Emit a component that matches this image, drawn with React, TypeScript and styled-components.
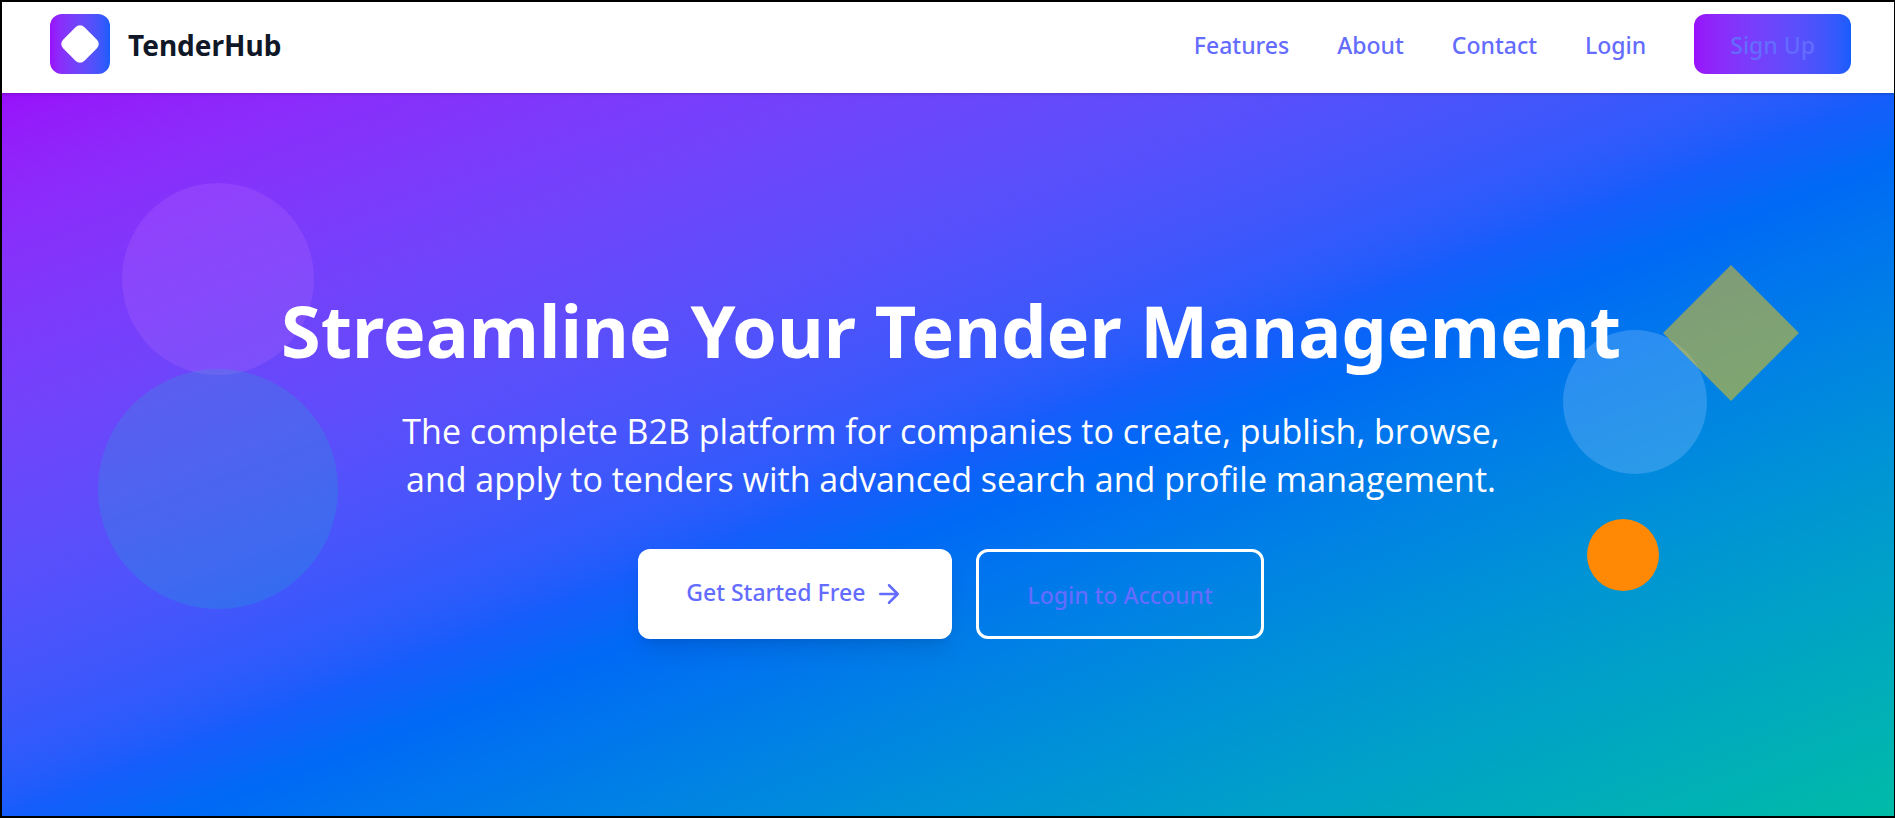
import React from 'react';
import styled, { createGlobalStyle, css } from 'styled-components';

const font = '"Noto Sans", "Open Sans", sans-serif';
const linkColor = '#646cff';
const brandGradient =
  'linear-gradient(to right in oklab, oklch(55.8% 0.288 302.321), oklch(54.6% 0.245 262.881))';

const GlobalStyle = createGlobalStyle`
  *, *::before, *::after { box-sizing: border-box; }
  body { margin: 0; font-family: ${font}; }
`;

const Page = styled.div`
  display: flex;
  flex-direction: column;
  min-height: 100vh;
  border: 2px solid #000;
  border-right-width: 1px;
  background: #fff;
`;

const Header = styled.header`
  position: relative;
  z-index: 1;
  display: flex;
  align-items: center;
  justify-content: space-between;
  padding: 12px 43px 19px 48px;
  background: #fff;
  box-shadow: 0 1px 3px rgba(0, 0, 0, 0.1), 0 1px 2px rgba(0, 0, 0, 0.1);
`;

const Brand = styled.div`
  display: flex;
  align-items: center;
  gap: 18px;
`;

const Logo = styled.span`
  display: flex;
  align-items: center;
  justify-content: center;
  width: 60px;
  height: 60px;
  border-radius: 12px;
  background: ${brandGradient};

  &::before {
    content: '';
    width: 30px;
    height: 30px;
    border-radius: 6px;
    background: #fff;
    transform: rotate(45deg);
  }
`;

const BrandName = styled.span`
  padding-top: 2px;
  font-size: 28px;
  line-height: 42px;
  font-weight: 700;
  color: #101828;
`;

const Nav = styled.nav`
  display: flex;
  align-items: center;
  gap: 48px;
`;

const TextLink = styled.a`
  padding-top: 2px;
  font-size: 23px;
  line-height: 36px;
  font-weight: 500;
  color: ${linkColor};
  text-decoration: none;
`;

const SignUpLink = styled(TextLink)`
  padding: 13px 36px 11px;
  border-radius: 12px;
  background: ${brandGradient};
`;

const Hero = styled.section`
  position: relative;
  flex: 1;
  display: flex;
  flex-direction: column;
  align-items: center;
  justify-content: center;
  padding: 96px 0 82px 6px;
  overflow: hidden;
  background: linear-gradient(
    to bottom right in oklab,
    oklch(55.8% 0.288 302.321),
    oklch(54.6% 0.245 262.881),
    oklch(70.4% 0.14 182.503)
  );
`;

const Shape = styled.span<{ $size: number; $top: number; $left?: number; $right?: number; $color: string; $diamond?: boolean }>`
  position: absolute;
  top: ${(p) => p.$top}px;
  ${(p) => (p.$left !== undefined ? `left: ${p.$left}px;` : `right: ${p.$right}px;`)}
  width: ${(p) => p.$size}px;
  height: ${(p) => p.$size}px;
  background: ${(p) => p.$color};
  ${(p) => (p.$diamond ? css`transform: rotate(45deg);` : css`border-radius: 50%;`)}
`;

const Content = styled.div`
  position: relative;
  display: flex;
  flex-direction: column;
  align-items: center;
  text-align: center;
  color: #fff;
`;

const Title = styled.h1`
  margin: 0 0 32px;
  font-size: 72px;
  line-height: 90px;
  font-weight: 700;
`;

const Lead = styled.p`
  max-width: 1152px;
  margin: 0 0 46px;
  font-family: "Open Sans", "Noto Sans", sans-serif;
  font-size: 34px;
  line-height: 48px;
`;

const Actions = styled.div`
  display: flex;
  gap: 24px;
`;

const ActionLink = styled(TextLink)<{ $outline?: boolean }>`
  padding: 25px 48px 23px;
  border-radius: 12px;
  ${(p) =>
    p.$outline
      ? css`border: 3px solid #fff;`
      : css`
          background: #fff;
          box-shadow: 0 15px 23px -5px rgba(0, 0, 0, 0.1), 0 6px 9px -6px rgba(0, 0, 0, 0.1);
        `}
`;

const Arrow = styled.svg`
  width: 30px;
  height: 30px;
  margin-left: 9px;
  vertical-align: middle;
  fill: none;
  stroke: currentColor;
  stroke-width: 2;
  stroke-linecap: round;
  stroke-linejoin: round;
`;

const links = ['Features', 'About', 'Contact', 'Login'];

export default function App() {
  return (
    <Page>
      <GlobalStyle />
      <Header>
        <Brand>
          <Logo />
          <BrandName>TenderHub</BrandName>
        </Brand>
        <Nav>
          {links.map((label) => (
            <TextLink key={label} href={`#${label.toLowerCase()}`}>{label}</TextLink>
          ))}
          <SignUpLink href="#signup">Sign Up</SignUpLink>
        </Nav>
      </Header>
      <Hero>
        <Shape $size={192} $top={90} $left={120} $color="rgba(194, 122, 255, 0.2)" />
        <Shape $size={240} $top={276} $left={96} $color="rgba(0, 213, 190, 0.17)" />
        <Shape $size={144} $top={237} $right={187} $color="rgba(142, 197, 255, 0.3)" />
        <Shape $size={96} $top={192} $right={115} $color="rgba(253, 199, 0, 0.5)" $diamond />
        <Shape $size={72} $top={426} $right={235} $color="#ff8904" />
        <Content>
          <Title>Streamline Your Tender Management</Title>
          <Lead>
            The complete B2B platform for companies to create, publish, browse, and apply to tenders
            with advanced search and profile management.
          </Lead>
          <Actions>
            <ActionLink href="#signup">
              Get Started Free
              <Arrow viewBox="0 0 24 24" aria-hidden="true">
                <path d="M5 12h14M12 5l7 7-7 7" />
              </Arrow>
            </ActionLink>
            <ActionLink href="#login" $outline>Login to Account</ActionLink>
          </Actions>
        </Content>
      </Hero>
    </Page>
  );
}
